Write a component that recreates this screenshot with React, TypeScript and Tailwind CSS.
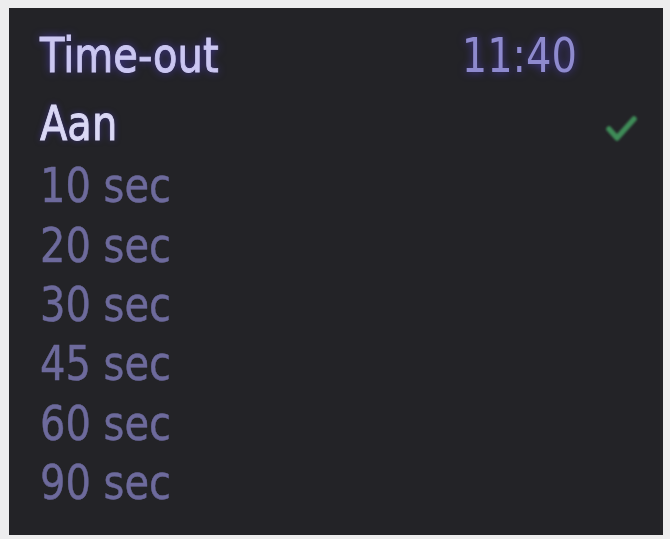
import React from 'react';

const options = ['10 sec', '20 sec', '30 sec', '45 sec', '60 sec', '90 sec'];

function Check() {
  return (
    <svg width="34" height="30" viewBox="0 0 34 30" className="blur-[0.8px]">
      <polyline
        points="5,16 13,25 30,6"
        fill="none"
        stroke="#3f8c58"
        strokeWidth="5.5"
        strokeLinecap="round"
        strokeLinejoin="round"
      />
    </svg>
  );
}

export default function App() {
  return (
    <div
      className="w-[670px] h-[539px] bg-[#ededee] pl-[9px] pt-[8px] pr-[7px] pb-[4px] overflow-hidden"
      style={{ fontFamily: '"DejaVu Sans", sans-serif' }}
    >
      <div className="w-full h-full bg-[#232327] flex flex-col pt-[18px] pl-[31px] pr-[25px] text-[40px]">
        {/* Header */}
        <div className="flex items-center h-[66px] leading-[59px] pb-[7px]">
          <span className="inline-block scale-y-[1.2] text-[#cbc7f2] blur-[0.6px] [-webkit-text-stroke:0.8px_#cbc7f2] [text-shadow:0_0_8px_rgba(90,70,230,0.7)]">
            Time-out
          </span>
          <span className="inline-block scale-y-[1.2] ml-auto mr-[61px] text-[#8e8ace] blur-[0.6px] [text-shadow:0_0_8px_rgba(90,70,230,0.6)]">
            11:40
          </span>
        </div>

        {/* Selected */}
        <div className="flex items-center h-[62px] leading-[59px]">
          <span className="inline-block scale-y-[1.2] text-[#dad8f5] blur-[0.6px] [-webkit-text-stroke:0.8px_#dad8f5] [text-shadow:0_0_6px_rgba(90,70,230,0.5)]">
            Aan
          </span>
          <span className="ml-auto mt-[10px]">
            <Check />
          </span>
        </div>

        {/* Options */}
        <div className="flex flex-col pt-[2px]">
          {options.map((o) => (
            <div key={o} className="flex items-center h-[59.4px] leading-[59px]">
              <span className="inline-block scale-y-[1.2] text-[#6d6a9c] blur-[0.6px] [-webkit-text-stroke:0.4px_#6d6a9c]">
                {o}
              </span>
            </div>
          ))}
        </div>
      </div>
    </div>
  );
}
